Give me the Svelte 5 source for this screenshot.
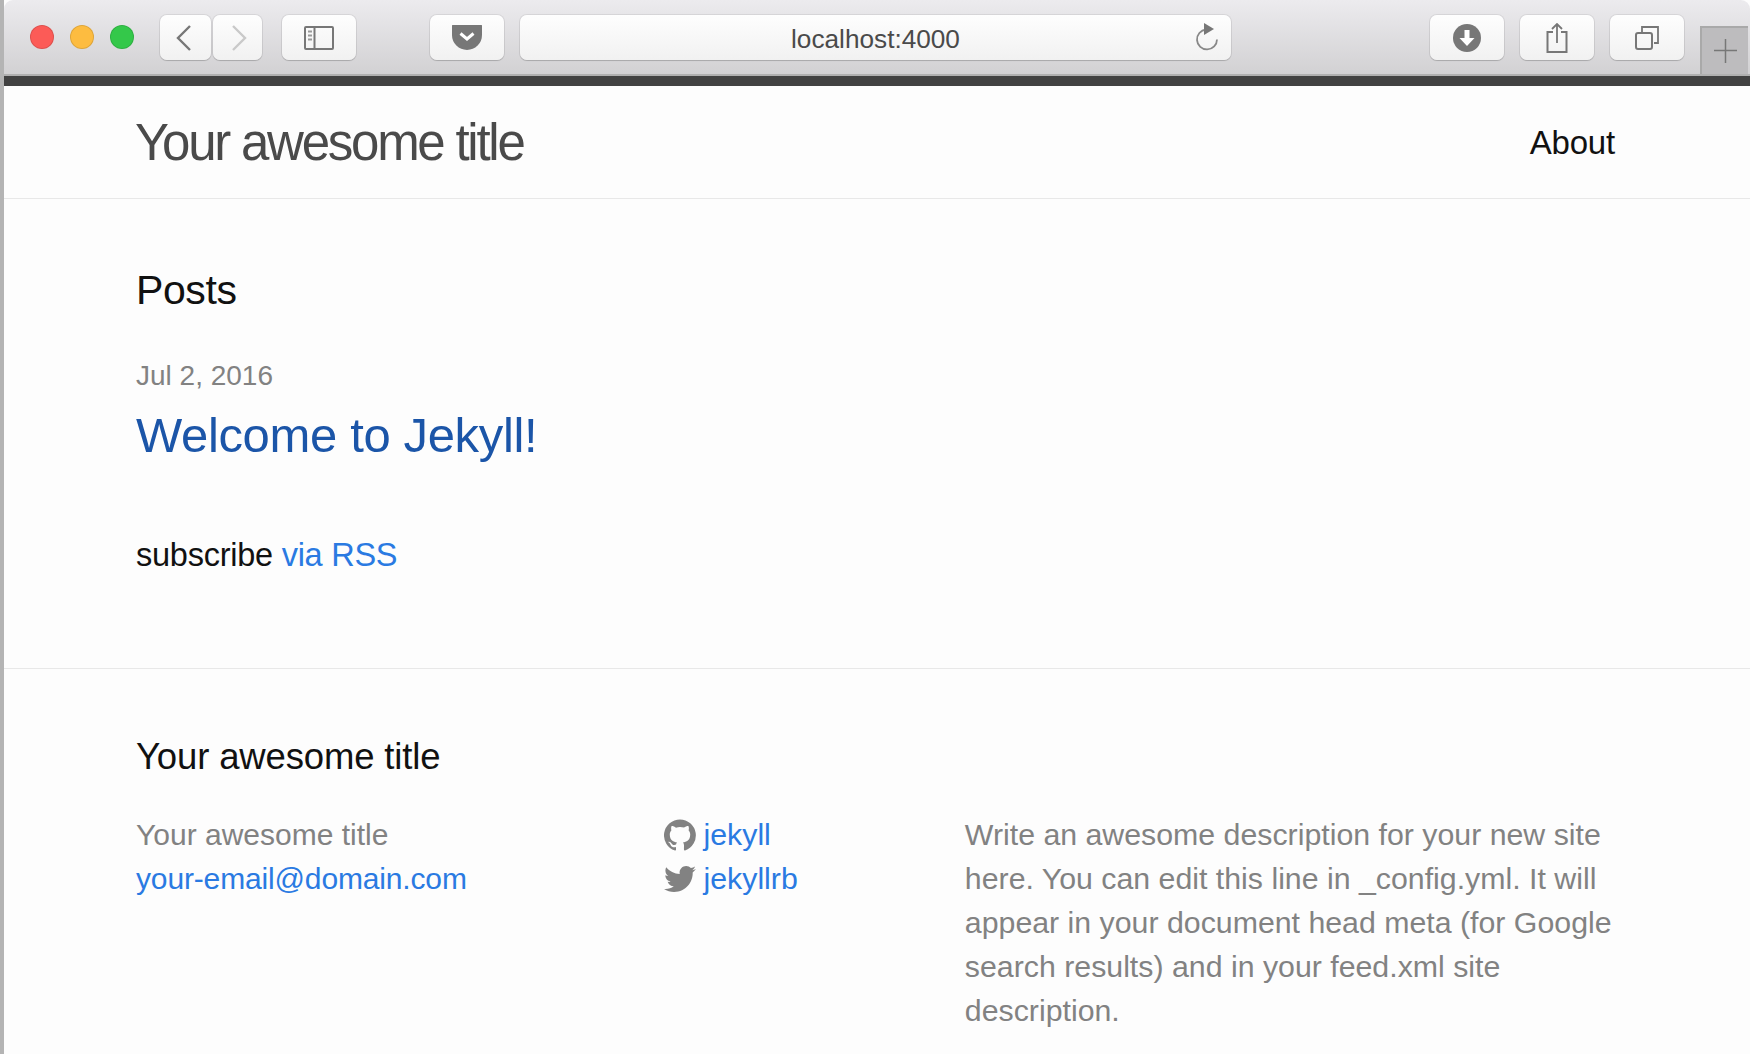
<script>
  const descLines = 'Write an awesome description for your new site here. You can edit this line in _config.yml. It will appear in your document head meta (for Google search results) and in your feed.xml site description.';
</script>

<div class="window">
  <div class="toolbar">
    <div class="lights">
      <span class="light red"></span><span class="light yellow"></span><span class="light green"></span>
    </div>
    <div class="navs">
      <div class="btn back"><svg width="16" height="26" viewBox="0 0 16 26"><path d="M14 1 2 13l12 12" fill="none" stroke="#777" stroke-width="2.400"/></svg></div>
      <div class="btn fwd"><svg width="16" height="26" viewBox="0 0 16 26"><path d="M2 1l12 12L2 25" fill="none" stroke="#c9c9c9" stroke-width="2.400"/></svg></div>
    </div>
    <div class="btn wide sidebar">
      <svg width="30" height="24" viewBox="0 0 30 24"><rect x="1" y="1" width="28" height="22" rx="1" fill="none" stroke="#777" stroke-width="2"/><path d="M10.500 1v22" stroke="#777" stroke-width="2"/><path d="M4 5.500h4M4 9.500h4M4 13.500h4" stroke="#999" stroke-width="2"/></svg>
    </div>
    <div class="btn wide pocket">
      <svg width="30" height="25" viewBox="0 0 30 25"><path d="M1 0h28c1 0 1 .5 1 1v9a15 15 0 0 1-30 0V1c0-.5 0-1 1-1z" fill="#777"/><path d="M8.500 8.500 15 14l6.500-5.500" fill="none" stroke="#fff" stroke-width="3"/></svg>
    </div>
    <div class="address">
      <span>localhost:4000</span>
      <svg class="reload" width="24" height="28" viewBox="0 0 24 28"><path d="M12 6.500a10 10 0 1 0 11 10" fill="none" stroke="#888" stroke-width="1.800"/><path d="M10 0l10 6-10 6z" fill="#777"/></svg>
    </div>
    <div class="right">
      <div class="btn wide"><svg width="28" height="28" viewBox="0 0 28 28"><circle cx="14" cy="14" r="14" fill="#777"/><path d="M11.500 6h5v8h5L14 22 6.500 14h5z" fill="#fff"/></svg></div>
      <div class="btn wide"><svg width="22" height="30" viewBox="0 0 22 30"><path d="M7 9H1.500v20h19V9H15" fill="none" stroke="#777" stroke-width="2"/><path d="M11 20V1.500M6 6l5-5 5 5" fill="none" stroke="#777" stroke-width="1.800"/></svg></div>
      <div class="btn wide"><svg width="24" height="24" viewBox="0 0 24 24"><rect x="1" y="7" width="16" height="16" rx="2" fill="none" stroke="#777" stroke-width="2"/><path d="M7 6V1h16v16h-4" fill="none" stroke="#777" stroke-width="1.800"/></svg></div>
    </div>
    <div class="newtab"><svg width="23" height="24" viewBox="0 0 23 24"><path d="M11.500 0v24M0 11.500h23" stroke="#777" stroke-width="1.500"/></svg></div>
  </div>
  <div class="darkbar"></div>

  <header class="site-header">
    <a class="site-title" href="#t">Your awesome title</a>
    <a class="about" href="#a">About</a>
  </header>

  <main class="content">
    <h1>Posts</h1>
    <div class="meta">Jul 2, 2016</div>
    <h2><a href="#p">Welcome to Jekyll!</a></h2>
    <p class="rss">subscribe <a href="#r">via RSS</a></p>
  </main>

  <footer>
    <h2 class="foot-title">Your awesome title</h2>
    <div class="cols">
      <div class="col c1">
        <div>Your awesome title</div>
        <div><a class="mail" href="#m">your-email@domain.com</a></div>
      </div>
      <div class="col c2">
        <div class="social">
          <svg width="32" height="32" viewBox="0 0 16 16"><path fill="#828282" d="M7.999.2a8 8 0 0 0-2.530 15.590c.4.074.546-.174.546-.386 0-.19-.007-.693-.011-1.360-2.225.483-2.695-1.073-2.695-1.073-.364-.924-.888-1.170-.888-1.170-.726-.497.055-.487.055-.487.803.056 1.226.825 1.226.825.713 1.222 1.872.869 2.328.665.073-.517.279-.870.508-1.070-1.777-.202-3.644-.888-3.644-3.953 0-.873.311-1.588.823-2.147-.082-.202-.356-1.016.078-2.117 0 0 .672-.215 2.200.820A7.672 7.672 0 0 1 8 4.040c.680.003 1.364.092 2.003.270 1.527-1.035 2.198-.820 2.198-.820.436 1.101.162 1.915.080 2.117.513.559.822 1.274.822 2.147 0 3.073-1.870 3.749-3.653 3.947.287.248.543.735.543 1.481 0 1.069-.010 1.932-.010 2.194 0 .214.144.463.550.385A8 8 0 0 0 7.999.2z"/></svg>
          <a href="#j">jekyll</a>
        </div>
        <div class="social">
          <svg width="32" height="32" viewBox="0 0 16 16"><path fill="#828282" d="M15.969 3.058c-.586.260-1.217.436-1.877.515.675-.405 1.194-1.045 1.438-1.809-.632.375-1.332.647-2.076.793-.596-.636-1.446-1.033-2.387-1.033-1.806 0-3.270 1.464-3.270 3.270 0 .256.029.506.085.745C5.163 5.404 2.753 4.102 1.140 2.124.859 2.607.698 3.168.698 3.767c0 1.134.577 2.135 1.455 2.722-.536-.017-1.040-.164-1.482-.409v.041c0 1.584 1.127 2.906 2.623 3.206-.274.075-.563.115-.861.115-.211 0-.416-.020-.616-.059.416 1.299 1.624 2.245 3.055 2.271-1.119.877-2.529 1.400-4.061 1.400-.264 0-.524-.015-.780-.046 1.447.928 3.166 1.469 5.013 1.469 6.015 0 9.304-4.983 9.304-9.304 0-.142-.003-.283-.009-.423.639-.461 1.193-1.037 1.631-1.693z"/></svg>
          <a href="#b">jekyllrb</a>
        </div>
      </div>
      <div class="col c3">{descLines}</div>
    </div>
  </footer>
</div>

<style>
  :global(body) { margin: 0; background: #fff; }
  .window {
    width: 1750px; height: 1054px; overflow: hidden; position: relative;
    font-family: "Liberation Sans", Arial, sans-serif; color: #111;
    box-sizing: border-box; padding-left: 4px; background: #fdfdfd;
  }
  .window::before { content: ""; position: absolute; left: 0; top: 0; bottom: 0; width: 4px; background: #b4b4b4; }
  a { color: #2a7ae2; text-decoration: none; }

  .toolbar {
    height: 76px; box-sizing: border-box; position: relative;
    display: flex; align-items: flex-start; padding-top: 15px;
    background: linear-gradient(#ecebee, #d2d1d3);
    border-bottom: 2px solid #b0b0b0; border-top-left-radius: 9px; border-top-right-radius: 9px;
  }
  .lights { display: flex; gap: 16px; margin: 10px 0 0 26px; width: 130px; }
  .light { width: 24px; height: 24px; border-radius: 50%; box-sizing: border-box; border: 1px solid rgba(0,0,0,.12); }
  .red { background: #fc5b57; }
  .yellow { background: #fdbc40; }
  .green { background: #34c84a; }
  .btn {
    height: 45px; box-sizing: border-box; border-radius: 7px;
    background: linear-gradient(#fefefe, #f1f1f1);
    box-shadow: 0 0 0 1px rgba(0,0,0,.07), 0 1px 1px rgba(0,0,0,.15);
    display: flex; align-items: center; justify-content: center;
  }
  .navs { display: flex; gap: 2px; margin-right: 20px; }
  .back { width: 51px; padding-right: 4px; }
  .fwd { width: 49px; padding-left: 2px; }
  .wide { width: 74px; }
  .sidebar { margin-right: 74px; }
  .pocket { margin-right: 16px; }
  .address {
    width: 711px; height: 45px; box-sizing: border-box; border-radius: 7px; position: relative;
    background: linear-gradient(#fefefe, #f1f1f1);
    box-shadow: 0 0 0 1px rgba(0,0,0,.07), 0 1px 1px rgba(0,0,0,.15);
    display: flex; align-items: center; justify-content: center;
    font-size: 26.200px; color: #4a4a4a; padding-top: 4px;
  }
  .reload { position: absolute; right: 13px; top: 8px; }
  .right { display: flex; gap: 16px; margin-left: 199px; }
  .newtab {
    position: absolute; right: 2px; top: 26px; width: 48px; height: 48px; box-sizing: border-box;
    background: #bdbcbe; border-left: 2px solid #a9a9a9; border-top: 2px solid #a9a9a9;
    display: flex; align-items: center; justify-content: center;
  }
  .darkbar { height: 10px; background: #424242; }

  .site-header {
    height: 113px; box-sizing: border-box; border-bottom: 1px solid #e8e8e8;
    display: flex; justify-content: space-between; align-items: center;
    padding: 0 135px 0 131px;
  }
  .site-title { font-size: 51px; letter-spacing: -2.250px; font-weight: 300; color: #4a4a4a; }
  .about { font-size: 33px; color: #111; letter-spacing: -.2px; padding-top: 2px; }

  .content { padding: 0 132px; height: 470px; box-sizing: border-box; border-bottom: 1px solid #e8e8e8; }
  h1 { font-size: 41px; font-weight: 400; margin: 0; padding-top: 68px; line-height: 46px; letter-spacing: -.4px; }
  .meta { font-size: 28px; color: #828282; margin-top: 47px; line-height: 32px; }
  .content h2 { font-size: 49px; font-weight: 400; margin: 15px 0 0; line-height: 56px; letter-spacing: -.35px; }
  .content h2 a { color: #1b55a8; }
  .rss { font-size: 32.500px; margin: 70px 0 0; line-height: 44px; letter-spacing: -.25px; }

  footer { padding: 66px 132px 0; }
  .foot-title { font-size: 36.500px; font-weight: 400; margin: 0; line-height: 44px; letter-spacing: -.15px; }
  .cols { display: flex; margin-top: 34px; font-size: 30px; line-height: 44px; color: #828282; }
  .mail { letter-spacing: -.15px; }
  .c1 { width: 532px; }
  .c2 { width: 305.500px; font-size: 30.300px; }
  .c3 { width: 660px; font-size: 30.300px; }
  .social { display: flex; align-items: center; height: 44px; gap: 8px; padding-left: 1px; }
  .social svg { flex: none; }
</style>
